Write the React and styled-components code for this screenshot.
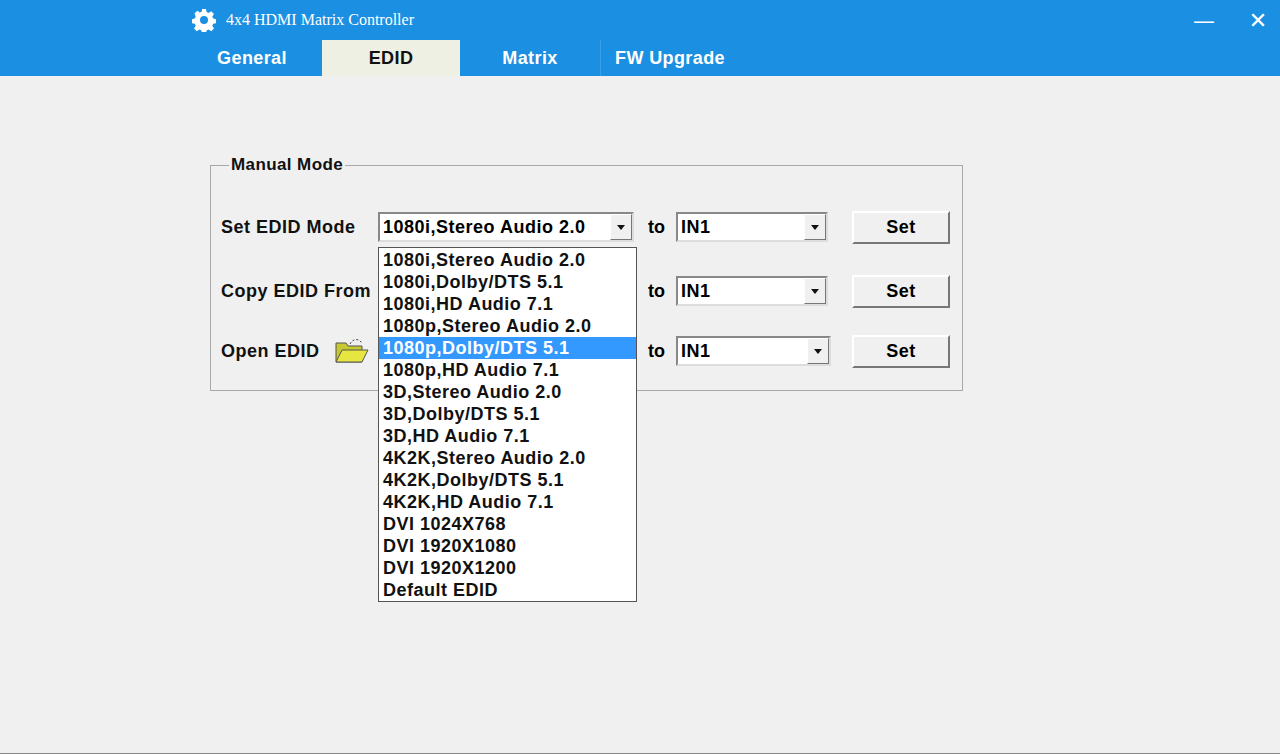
import React from "react";
import styled, { createGlobalStyle } from "styled-components";

const G = createGlobalStyle`
  html,body{margin:0;padding:0;background:#f0f0f0;}
  body{font-family:"Liberation Sans",Arial,sans-serif;}
`;
const Win = styled.div`width:1280px;height:754px;display:flex;flex-direction:column;background:#f0f0f0;position:relative;border-bottom:1px solid #888;box-sizing:border-box;`;
const Head = styled.div`background:#1b8fe2;height:76px;display:flex;flex-direction:column;`;
const TitleRow = styled.div`height:40px;display:flex;align-items:center;padding-left:192px;gap:10px;color:#fff;font-family:"Liberation Serif",serif;font-size:16px;`;
const Spacer = styled.div`flex:1;`;
const Ctl = styled.div`width:44px;display:flex;justify-content:center;color:#fff;font-size:22px;font-family:"DejaVu Sans",sans-serif;`;
const Tabs = styled.div`display:flex;padding-left:182px;height:36px;`;
const Tab = styled.div`width:${p=>p.w}px;display:flex;align-items:center;justify-content:center;font-weight:bold;font-size:18px;letter-spacing:0.4px;color:${p=>p.active?"#111":"#fff"};background:${p=>p.active?"#eef0e4":"transparent"};border-left:${p=>p.sep?"1px solid #3a9fe6":"none"};`;
const Body = styled.div`padding:79px 0 0 210px;`;
const Group = styled.fieldset`width:753px;height:236px;box-sizing:border-box;margin:0;border:1px solid #a8a8a8;padding:35px 0 0 10px;`;
const Legend = styled.legend`font-weight:bold;font-size:17px;letter-spacing:0.4px;padding:0 2px;margin-left:8px;color:#111;`;
const Row = styled.div`display:grid;grid-template-columns:157px 258px 40px 176px 100px;align-items:center;height:34px;margin-bottom:${p=>p.mb}px;`;
const Label = styled.div`font-weight:bold;font-size:18px;letter-spacing:0.5px;color:#111;display:flex;align-items:center;gap:14px;`;
const Combo = styled.div`width:${p=>p.w}px;height:30px;box-sizing:border-box;border:2px solid;border-color:#888 #ddd #ddd #888;background:#fff;display:flex;align-items:center;font-weight:bold;font-size:18px;letter-spacing:0.5px;padding-left:3px;`;
const Arrow = styled.div`margin-left:auto;width:22px;height:26px;background:#f0f0f0;border:1px solid;border-color:#fff #777 #777 #fff;box-sizing:border-box;display:flex;align-items:center;justify-content:center;&:after{content:"";border:4px solid transparent;border-top:5px solid #111;border-bottom:0;}`;
const To = styled.div`font-weight:bold;font-size:18px;padding-left:12px;`;
const Btn = styled.div`width:98px;height:33px;box-sizing:border-box;border:2px solid;border-color:#fff #777 #777 #fff;background:#f0f0f0;display:flex;align-items:center;justify-content:center;font-weight:bold;font-size:18px;letter-spacing:0.5px;`;
const List = styled.div`position:absolute;left:378px;top:247px;width:259px;height:355px;box-sizing:border-box;border:1px solid #555;background:#fff;padding-top:1px;`;
const Item = styled.div`height:22px;line-height:22px;padding-left:4px;font-weight:bold;font-size:18px;letter-spacing:0.5px;color:${p=>p.sel?"#fff":"#111"};background:${p=>p.sel?"#3399ff":"transparent"};`;

const items=["1080i,Stereo Audio 2.0","1080i,Dolby/DTS 5.1","1080i,HD Audio 7.1","1080p,Stereo Audio 2.0","1080p,Dolby/DTS 5.1","1080p,HD Audio 7.1","3D,Stereo Audio 2.0","3D,Dolby/DTS 5.1","3D,HD Audio 7.1","4K2K,Stereo Audio 2.0","4K2K,Dolby/DTS 5.1","4K2K,HD Audio 7.1","DVI 1024X768","DVI 1920X1080","DVI 1920X1200","Default EDID"];

const Gear=()=>(<svg width="24" height="24" viewBox="0 0 24 24"><path fill="#fff" d="M10 1h4l.6 3 2 .9 2.6-1.7 2.8 2.8-1.7 2.6.9 2 3 .6v4l-3 .6-.9 2 1.7 2.6-2.8 2.8-2.6-1.7-2 .9-.6 3h-4l-.6-3-2-.9-2.6 1.7-2.8-2.8 1.7-2.6-.9-2-3-.6v-4l3-.6.9-2L2.5 5.6l2.8-2.8 2.6 1.7 2-.9z"/><circle cx="12" cy="12" r="4" fill="#1b8fe2"/></svg>);
const Folder=()=>(<svg width="36" height="28" viewBox="0 0 36 28"><path d="M2 6h10l2 3h14v16H2z" fill="#c8c830" stroke="#555"/><path d="M2 25l6-12h26l-6 12z" fill="#e6e640" stroke="#555"/><path d="M16 7c3-6 10-6 12 0" fill="none" stroke="#444" strokeDasharray="2 2"/></svg>);

export default function App(){
  return(<Win><G/>
    <Head>
      <TitleRow><Gear/><span>4x4 HDMI Matrix Controller</span><Spacer/><Ctl>—</Ctl><Ctl>✕</Ctl></TitleRow>
      <Tabs>
        <Tab w={140}>General</Tab><Tab w={138} active>EDID</Tab><Tab w={140}>Matrix</Tab><Tab w={138} sep>FW Upgrade</Tab>
      </Tabs>
    </Head>
    <Body>
      <Group>
        <Legend>Manual Mode</Legend>
        <Row mb={30}><Label>Set EDID Mode</Label><Combo w={256}>1080i,Stereo Audio 2.0<Arrow/></Combo><To>to</To><Combo w={152}>IN1<Arrow/></Combo><Btn>Set</Btn></Row>
        <Row mb={26}><Label>Copy EDID From</Label><div/><To>to</To><Combo w={152}>IN1<Arrow/></Combo><Btn>Set</Btn></Row>
        <Row mb={0}><Label>Open EDID <Folder/></Label><div/><To>to</To><Combo w={155}>IN1<Arrow/></Combo><Btn>Set</Btn></Row>
      </Group>
    </Body>
    <List>{items.map((t,i)=><Item key={t} sel={i===4}>{t}</Item>)}</List>
  </Win>);
}
